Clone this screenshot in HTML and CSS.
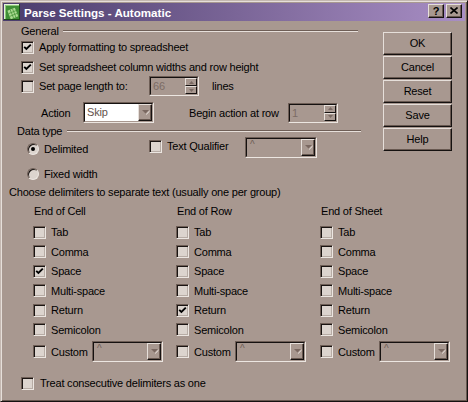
FILE: index.html
```html
<!DOCTYPE html>
<html>
<head>
<meta charset="utf-8">
<title>Parse Settings - Automatic</title>
<link rel="stylesheet" href="styles.css">
</head>
<body>
<div class="window">
  <div class="titlebar">
    <svg class="appicon" viewBox="0 0 16 16" width="16" height="16">
      <rect x="0" y="0" width="16" height="16" fill="#3f8f35"/>
      <path d="M0 0H16V1H1V16H0Z" fill="#e4f2d8"/>
      <path d="M1 1H15V2H2V15H1Z" fill="#8cc878"/>
      <path d="M16 0V16H0V15H15V0Z" fill="#1d4a18"/>
      <g transform="rotate(-22 9 10)">
        <rect x="5" y="5" width="8" height="9" fill="#aedc94"/>
        <path d="M5 8H13M5 11H13M8 5V14M10.5 5V14" stroke="#4f9a40" stroke-width="0.8"/>
      </g>
    </svg>
    <span class="title">Parse Settings - Automatic</span>
    <span class="tbtn qbtn">?</span>
    <span class="tbtn xbtn"><svg viewBox="0 0 8 7" width="8" height="7"><path d="M0.5 0.5L7.5 6.5M7.5 0.5L0.5 6.5" stroke="#000" stroke-width="1.6"/></svg></span>
  </div>

  <div class="client">
    <div class="upper">
      <div class="main">
        <div class="group g-general"><span class="glabel">General</span><span class="etch"></span></div>

        <div class="row r-apply ind18">
          <span class="cb"><svg viewBox="0 0 9 9" width="9" height="9"><polyline points="1.2,3.8 3.4,6 7.8,1.6" fill="none" stroke="#000" stroke-width="1.9"/></svg></span>
          <span class="lbl">Apply formatting to spreadsheet</span>
        </div>

        <div class="row r-cols ind18">
          <span class="cb"><svg viewBox="0 0 9 9" width="9" height="9"><polyline points="1.2,3.8 3.4,6 7.8,1.6" fill="none" stroke="#000" stroke-width="1.9"/></svg></span>
          <span class="lbl">Set spreadsheet column widths and row height</span>
        </div>

        <div class="row r-page ind18">
          <span class="cb"></span>
          <span class="lbl w-page">Set page length to:</span>
          <div class="spin">
            <div class="spin-in">
              <span class="val">66</span>
              <span class="spinbtns">
                <span class="sbtn"><svg viewBox="0 0 5 3" width="5" height="3"><polygon points="2.5,0 5,3 0,3" fill="#7a6a63"/></svg></span>
                <span class="sbtn"><svg viewBox="0 0 5 3" width="5" height="3"><polygon points="0,0 5,0 2.5,3" fill="#7a6a63"/></svg></span>
              </span>
            </div>
          </div>
          <span class="lines">lines</span>
        </div>

        <div class="row r-action ind38">
          <span class="w-action">Action</span>
          <div class="combo w71">
            <div class="combo-in white">
              <span class="ctext">Skip</span>
              <span class="dropbtn"><svg viewBox="0 0 8 5" width="8" height="5"><polygon points="0,0 7,0 3.5,3.5" fill="#7a6861"/><path d="M4.2 4.4L7.6 1" stroke="#f2ece8" stroke-width="1"/></svg></span>
            </div>
          </div>
          <span class="begin">Begin action at row</span>
          <div class="spin">
            <div class="spin-in">
              <span class="val">1</span>
              <span class="spinbtns">
                <span class="sbtn"><svg viewBox="0 0 5 3" width="5" height="3"><polygon points="2.5,0 5,3 0,3" fill="#7a6a63"/></svg></span>
                <span class="sbtn"><svg viewBox="0 0 5 3" width="5" height="3"><polygon points="0,0 5,0 2.5,3" fill="#7a6a63"/></svg></span>
              </span>
            </div>
          </div>
        </div>

        <div class="group g-data"><span class="glabel">Data type</span><span class="etch"></span></div>

        <div class="r-delim ind24">
          <div class="opt w-delim"><span class="radio on"></span><span class="lbl">Delimited</span></div>
          <div class="opt w-tq"><span class="cb"></span><span class="lbl">Text Qualifier</span></div>
          <div class="combo w72 tqcombo">
            <div class="combo-in">
              <span class="caret">^</span>
              <span class="dropbtn"><svg viewBox="0 0 8 5" width="8" height="5"><polygon points="0,0 7,0 3.5,3.5" fill="#7a6861"/><path d="M4.2 4.4L7.6 1" stroke="#f2ece8" stroke-width="1"/></svg></span>
            </div>
          </div>
        </div>
      </div>

      <div class="buttons">
        <div class="btn">OK</div>
        <div class="btn">Cancel</div>
        <div class="btn">Reset</div>
        <div class="btn">Save</div>
        <div class="btn">Help</div>
      </div>
    </div>

    <div class="lower">
      <div class="row r-fixed ind24"><span class="radio"></span><span class="lbl">Fixed width</span></div>
      <div class="row r-choose ind6">Choose delimiters to separate text (usually one per group)</div>

      <div class="dcols">
        <div class="dcol c1">
          <div class="row dhead">End of Cell</div>
          <div class="row"><span class="cb"></span><span class="lbl">Tab</span></div>
          <div class="row"><span class="cb"></span><span class="lbl">Comma</span></div>
          <div class="row"><span class="cb"><svg viewBox="0 0 9 9" width="9" height="9"><polyline points="1.2,3.8 3.4,6 7.8,1.6" fill="none" stroke="#000" stroke-width="1.9"/></svg></span><span class="lbl">Space</span></div>
          <div class="row"><span class="cb"></span><span class="lbl">Multi-space</span></div>
          <div class="row"><span class="cb"></span><span class="lbl">Return</span></div>
          <div class="row"><span class="cb"></span><span class="lbl">Semicolon</span></div>
          <div class="row custom"><span class="cb"></span><span class="lbl w-custom">Custom</span>
            <div class="combo w71"><div class="combo-in"><span class="caret">^</span><span class="dropbtn"><svg viewBox="0 0 8 5" width="8" height="5"><polygon points="0,0 7,0 3.5,3.5" fill="#7a6861"/><path d="M4.2 4.4L7.6 1" stroke="#f2ece8" stroke-width="1"/></svg></span></div></div>
          </div>
        </div>
        <div class="dcol c2">
          <div class="row dhead">End of Row</div>
          <div class="row"><span class="cb"></span><span class="lbl">Tab</span></div>
          <div class="row"><span class="cb"></span><span class="lbl">Comma</span></div>
          <div class="row"><span class="cb"></span><span class="lbl">Space</span></div>
          <div class="row"><span class="cb"></span><span class="lbl">Multi-space</span></div>
          <div class="row"><span class="cb"><svg viewBox="0 0 9 9" width="9" height="9"><polyline points="1.2,3.8 3.4,6 7.8,1.6" fill="none" stroke="#000" stroke-width="1.9"/></svg></span><span class="lbl">Return</span></div>
          <div class="row"><span class="cb"></span><span class="lbl">Semicolon</span></div>
          <div class="row custom"><span class="cb"></span><span class="lbl w-custom">Custom</span>
            <div class="combo w71"><div class="combo-in"><span class="caret">^</span><span class="dropbtn"><svg viewBox="0 0 8 5" width="8" height="5"><polygon points="0,0 7,0 3.5,3.5" fill="#7a6861"/><path d="M4.2 4.4L7.6 1" stroke="#f2ece8" stroke-width="1"/></svg></span></div></div>
          </div>
        </div>
        <div class="dcol c3">
          <div class="row dhead">End of Sheet</div>
          <div class="row"><span class="cb"></span><span class="lbl">Tab</span></div>
          <div class="row"><span class="cb"></span><span class="lbl">Comma</span></div>
          <div class="row"><span class="cb"></span><span class="lbl">Space</span></div>
          <div class="row"><span class="cb"></span><span class="lbl">Multi-space</span></div>
          <div class="row"><span class="cb"></span><span class="lbl">Return</span></div>
          <div class="row"><span class="cb"></span><span class="lbl">Semicolon</span></div>
          <div class="row custom"><span class="cb"></span><span class="lbl w-custom">Custom</span>
            <div class="combo w71"><div class="combo-in"><span class="caret">^</span><span class="dropbtn"><svg viewBox="0 0 8 5" width="8" height="5"><polygon points="0,0 7,0 3.5,3.5" fill="#7a6861"/><path d="M4.2 4.4L7.6 1" stroke="#f2ece8" stroke-width="1"/></svg></span></div></div>
          </div>
        </div>
      </div>

      <div class="row r-treat ind18"><span class="cb"></span><span class="lbl l6">Treat consecutive delimiters as one</span></div>
    </div>
  </div>
</div>
</body>
</html>
```
FILE: styles.css
```css
* { box-sizing: border-box; }
html, body { margin: 0; padding: 0; }
body {
  width: 468px;
  height: 402px;
  overflow: hidden;
  font-family: "Liberation Sans", Arial, sans-serif;
  font-size: 11px;
  letter-spacing: -0.2px;
  color: #000;
  background: #a89890;
}

.window {
  width: 468px;
  height: 402px;
  background: #a89890;
  border: 1px solid;
  border-color: #c4b8b1 #151110 #151110 #c4b8b1;
  box-shadow: inset 1px 1px #e6dfda, inset -1px -1px #685850;
  padding: 2px;
  display: flex;
  flex-direction: column;
}

/* title bar */
.titlebar {
  flex: none;
  height: 18px;
  display: flex;
  align-items: center;
  padding: 0 3px 0 1px;
  background: linear-gradient(to right, #4a3c6c 0%, #7a6597 50%, #a88ec4 100%);
}
.appicon { flex: none; display: block; }
.title {
  flex: 1;
  margin-left: 4px;
  color: #fff;
  font-weight: bold;
  font-size: 11.6px;
  letter-spacing: 0;
  white-space: nowrap;
}
.tbtn {
  flex: none;
  width: 16px;
  height: 14px;
  align-self: flex-start;
  margin-top: 1px;
  background: #a89890;
  border: 1px solid;
  border-color: #e6dfda #151110 #151110 #e6dfda;
  box-shadow: inset -1px -1px #685850;
  display: flex;
  align-items: center;
  justify-content: center;
}
.tbtn + .tbtn { margin-left: 2px; }
.qbtn {
  font-weight: bold;
  font-size: 11px;
  line-height: 12px;
  letter-spacing: 0;
  padding-bottom: 1px;
}
.xbtn svg { display: block; margin-bottom: 1px; }

/* client area */
.client { flex: 1; display: flex; flex-direction: column; }
.upper { display: flex; }
.main { width: 380px; flex: none; display: flex; flex-direction: column; }
.buttons {
  flex: none;
  width: 69px;
  padding-top: 11px;
  display: flex;
  flex-direction: column;
  gap: 1px;
}
.btn {
  height: 23px;
  border: 1px solid;
  border-color: #e6dfda #151110 #151110 #e6dfda;
  box-shadow: inset -1px -1px #685850;
  display: flex;
  align-items: center;
  justify-content: center;
  padding-bottom: 1px;
}

.row {
  display: flex;
  align-items: center;
  height: 16px;
  white-space: nowrap;
  flex: none;
}
.ind6 { margin-left: 6px; }
.ind18 { margin-left: 18px; }
.ind24 { margin-left: 24px; }
.ind38 { margin-left: 38px; }

.lbl { margin-left: 5px; white-space: nowrap; }
.l6 { margin-left: 6px; }

/* group header lines */
.group {
  display: flex;
  align-items: center;
  flex: none;
}
.g-general { margin: 2px 0 0 18px; width: 337px; height: 16px; }
.g-data { margin: 1px 0 0 14px; width: 344px; height: 14px; }
.glabel { white-space: nowrap; }
.etch {
  flex: 1;
  height: 2px;
  margin-left: 4px;
  border-top: 1px solid #6e5e56;
  border-bottom: 1px solid #e6dfda;
}
.g-data .etch { margin-left: 5px; }

/* checkbox */
.cb {
  flex: none;
  width: 13px;
  height: 13px;
  background: #dcd4ce;
  border: 1px solid;
  border-color: #6e5e56 #ece6e1 #ece6e1 #6e5e56;
  box-shadow: inset 1px 1px #1a1412, inset -1px -1px #b7aca5;
  display: flex;
  align-items: center;
  justify-content: center;
}
.cb svg { display: block; }

/* radio */
.radio {
  flex: none;
  width: 12px;
  height: 12px;
  border-radius: 50%;
  background: #dcd4ce;
  border: 1px solid;
  border-color: #6e5e56 #ece6e1 #ece6e1 #6e5e56;
  box-shadow: inset 1px 1px #1a1412;
  display: flex;
  align-items: center;
  justify-content: center;
}
.radio.on::after {
  content: "";
  width: 4px;
  height: 4px;
  border-radius: 50%;
  background: #000;
}

/* spin box */
.spin {
  flex: none;
  width: 50px;
  height: 20px;
  border: 1px solid;
  border-color: #6e5e56 #ece6e1 #ece6e1 #6e5e56;
}
.spin-in {
  height: 100%;
  display: flex;
  border: 1px solid;
  border-color: #151110 #a89890 #a89890 #151110;
}
.val {
  flex: 1;
  padding-left: 2px;
  line-height: 16px;
  color: #7c6c65;
}
.spinbtns {
  flex: none;
  width: 12px;
  display: flex;
  flex-direction: column;
}
.sbtn {
  height: 8px;
  border: 1px solid;
  border-color: #e6dfda #151110 #151110 #e6dfda;
  display: flex;
  align-items: center;
  justify-content: center;
}
.sbtn svg { display: block; }

/* combo box */
.combo {
  flex: none;
  height: 21px;
  border: 1px solid;
  border-color: #6e5e56 #ece6e1 #ece6e1 #6e5e56;
}
.w71 { width: 71px; }
.w72 { width: 72px; }
.combo-in {
  height: 100%;
  display: flex;
  border: 1px solid;
  border-color: #151110 #a89890 #a89890 #151110;
}
.combo-in.white { background: #fff; }
.ctext {
  flex: 1;
  padding-left: 2px;
  line-height: 17px;
  color: #65544d;
}
.caret {
  flex: 1;
  align-self: flex-start;
  padding: 1px 0 0 3px;
  font-size: 10px;
  line-height: 10px;
  color: #6e5e57;
}
.dropbtn {
  flex: none;
  width: 14px;
  height: 100%;
  background: #a89890;
  border: 1px solid;
  border-color: #e6dfda #151110 #151110 #e6dfda;
  box-shadow: inset -1px -1px #685850;
  display: flex;
  align-items: center;
  justify-content: center;
}
.dropbtn svg { display: block; margin-left: 1px; }

/* specific rows */
.r-apply { margin-top: 0; }
.r-cols { margin-top: 4px; }
.r-page { margin-top: 1px; height: 20px; }
.w-page { width: 110px; flex: none; }
.lines { margin-left: 13px; }
.r-action { margin-top: 6px; height: 21px; }
.w-action { width: 42px; flex: none; }
.begin { margin-left: 35px; width: 99px; flex: none; }

.r-delim {
  display: flex;
  align-items: flex-start;
  height: 20px;
  flex: none;
}
.opt { display: flex; align-items: center; height: 16px; flex: none; white-space: nowrap; }
.w-delim { width: 122px; margin-top: 3px; }
.w-tq { width: 96px; }
.tqcombo { margin-top: -1px; }

.lower { display: flex; flex-direction: column; }
.r-fixed { margin-top: 8px; }
.r-choose { margin-top: 2px; }

.dcols {
  display: flex;
  margin-top: 3px;
  padding-left: 30px;
}
.dcol {
  display: flex;
  flex-direction: column;
  gap: 3.5px;
}
.c1 { width: 143px; }
.c2 { width: 144px; }
.c3 { flex: 1; }
.dhead { padding-left: 1px; margin-bottom: 1.5px; }
.row.custom { height: 21px; }
.w-custom { width: 41px; flex: none; }

.r-treat { margin-top: 13px; }
```
